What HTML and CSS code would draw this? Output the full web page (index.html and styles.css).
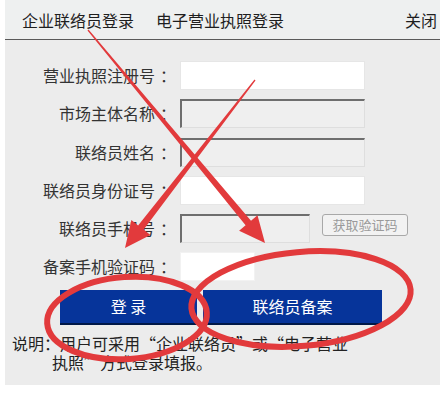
FILE: index.html
```html
<!DOCTYPE html>
<html lang="zh-CN">
<head>
<meta charset="utf-8">
<link rel="stylesheet" href="styles.css">
</head>
<body>
<div class="page">
  <div class="tabs">
    <span class="tab">企业联络员登录</span>
    <span class="tab">电子营业执照登录</span>
    <span class="tab close">关闭</span>
  </div>
  <div class="panel">
    <div class="form">
      <label class="lbl">营业执照注册号<span class="colon">：</span></label>
      <div class="field"><span class="inp"></span></div>
      <label class="lbl">市场主体名称<span class="colon">：</span></label>
      <div class="field"><span class="inp dis"></span></div>
      <label class="lbl">联络员姓名<span class="colon">：</span></label>
      <div class="field"><span class="inp dis"></span></div>
      <label class="lbl">联络员身份证号<span class="colon">：</span></label>
      <div class="field"><span class="inp"></span></div>
      <label class="lbl">联络员手机号<span class="colon">：</span></label>
      <div class="field"><span class="inp dis short"></span><span class="code-btn">获取验证码</span></div>
      <label class="lbl">备案手机验证码<span class="colon">：</span></label>
      <div class="field"><span class="inp tiny"></span></div>
    </div>
    <div class="actions">
      <span class="btn login">登&nbsp;录</span>
      <span class="btn reg">联络员备案</span>
    </div>
    <p class="note">说明：用户可采用“企业联络员”或“电子营业执照”方式登录填报。</p>
  </div>
  <svg class="annot" width="444" height="397" viewBox="0 0 444 397">
    <polygon fill="#e23a3c" points="88.5,29.6 251,220.8 257.5,215.3 265,243 239.1,230.7 245.6,225.2 87.5,30.4"/>
    <polygon fill="#e23a3c" points="255.5,80.4 143.7,229.6 150.4,234.9 125,248 131.4,220.1 138.1,225.4 254.5,79.6"/>
    <ellipse cx="127" cy="318" rx="80" ry="41" fill="none" stroke="#e23a3c" stroke-width="6" transform="rotate(-4 127 318)"/>
    <ellipse cx="301" cy="299" rx="110" ry="47" fill="none" stroke="#e23a3c" stroke-width="6" transform="rotate(-5 301 299)"/>
  </svg>
</div>
</body>
</html>
```
FILE: styles.css
```css
html, body {
  margin: 0;
  padding: 0;
  background: #ffffff;
}
body {
  font-family: "Noto Sans CJK SC", "Liberation Sans", sans-serif;
  color: #222;
}
.page {
  position: relative;
  width: 444px;
  height: 397px;
  overflow: hidden;
}
.tabs {
  margin-left: 5px;
  width: 435px;
  height: 40px;
  background: #eef0f0;
  border-bottom: 1px solid #5a5a5a;
  display: flex;
  align-items: center;
  padding-left: 17px;
  box-sizing: border-box;
  gap: 22px;
  font-size: 16px;
  line-height: 20px;
  color: #1e1e1e;
}
.tab {
  white-space: nowrap;
}
.close {
  margin-left: auto;
  margin-right: 3px;
}
.panel {
  margin-left: 5px;
  width: 435px;
  height: 345px;
  background: #ececec;
  padding-top: 21px;
  box-sizing: border-box;
}
.form {
  display: grid;
  grid-template-columns: 166px 1fr;
  column-gap: 9px;
  row-gap: 9.3px;
}
.lbl {
  text-align: right;
  font-size: 16px;
  line-height: 29px;
  color: #333;
  white-space: nowrap;
}
.colon {
  padding-left: 5px;
  margin-right: -5px;
}
.field {
  display: flex;
  align-items: flex-start;
  height: 29px;
  gap: 12px;
}
.inp {
  display: block;
  width: 185px;
  height: 29px;
  box-sizing: border-box;
  background: #ffffff;
  border: 1px solid #e6e6e6;
}
.inp.dis {
  background: #efefef;
  border-top: 2px solid #6e6e6e;
  border-left: 2px solid #6e6e6e;
  border-right: 1px solid #dedede;
  border-bottom: 1px solid #dedede;
}
.inp.short {
  width: 130px;
}
.inp.tiny {
  width: 75px;
  border-color: #f2f2f2;
}
.code-btn {
  display: block;
  width: 86px;
  height: 22px;
  box-sizing: border-box;
  border: 1px solid #a8a8a8;
  border-radius: 3px;
  background: #f2f2f2;
  color: #9a9a9a;
  font-size: 13px;
  line-height: 20px;
  text-align: center;
}
.actions {
  display: flex;
  gap: 6px;
  margin-top: 9px;
  padding-left: 55px;
}
.btn {
  display: block;
  height: 35px;
  box-sizing: border-box;
  background: #06349a;
  border-bottom: 2px solid #001848;
  color: #ffffff;
  font-size: 16px;
  line-height: 33px;
  text-align: center;
}
.login {
  width: 137px;
}
.reg {
  width: 179px;
}
.note {
  margin: 9px 0 0 0;
  width: 300px;
  padding-left: 47px;
  text-indent: -40px;
  font-size: 16px;
  line-height: 19px;
  color: #222;
}
.annot {
  position: absolute;
  left: 0;
  top: 0;
  pointer-events: none;
}
```
